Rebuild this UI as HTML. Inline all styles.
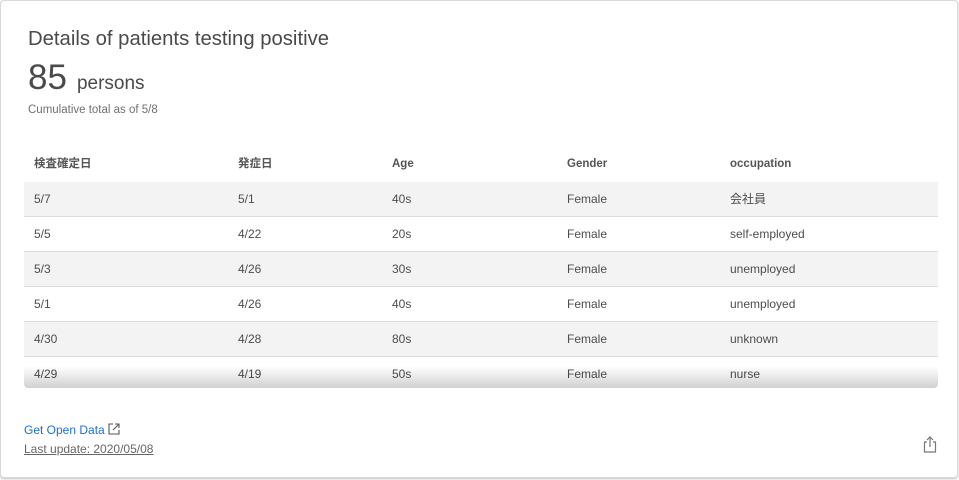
<!DOCTYPE html>
<html><head><meta charset="utf-8"><style>
body{margin:0;background:#fff;font-family:"Liberation Sans","Noto Sans CJK JP",sans-serif;color:#4d4d4d;}
.card{position:absolute;left:0;top:0;width:956px;height:476px;border:1px solid #d9d9d9;border-radius:4px;box-shadow:0 1px 2px rgba(0,0,0,.25);background:#fff;}
.t{position:absolute;left:27px;top:27px;font-size:20.3px;color:#4a4a4a;}
.n{position:absolute;left:27px;top:57px;font-size:35px;color:#4a4a4a;}
.n span{font-size:19px;margin-left:10px;}
.s{position:absolute;left:27px;top:103px;font-size:11.5px;color:#707070;}
.tbl{position:absolute;left:23px;top:146px;width:914px;height:241px;overflow:hidden;border-radius:0 0 4px 4px;}
.r{position:relative;height:35px;border-bottom:1px solid #dcdcdc;font-size:12px;color:#4d4d4d;box-sizing:border-box;}
.r.g{background:#f3f3f3}
.r.h{border-bottom:none;font-weight:bold;font-size:11.5px;color:#555}
.r div{position:absolute;top:10px;line-height:14px}
.c1{left:10px}.c2{left:214px}.c3{left:368px}.c4{left:543px}.c5{left:706px}
.fade{position:absolute;left:0;right:0;bottom:0;height:22px;background:linear-gradient(rgba(0,0,0,0),rgba(0,0,0,.18));}
.od{position:absolute;left:23px;top:422px;font-size:12px;color:#1c6fd6;}
.lu{position:absolute;left:23px;top:441px;font-size:12px;color:#666;text-decoration:underline;}
</style></head><body><div class="card">
<div class="t">Details of patients testing positive</div>
<div class="n">85<span>persons</span></div>
<div class="s">Cumulative total as of 5/8</div>
<div class="tbl">
<div class="r h"><div class="c1">検査確定日</div><div class="c2">発症日</div><div class="c3">Age</div><div class="c4">Gender</div><div class="c5">occupation</div></div>
<div class="r g"><div class="c1">5/7</div><div class="c2">5/1</div><div class="c3">40s</div><div class="c4">Female</div><div class="c5">会社員</div></div>
<div class="r"><div class="c1">5/5</div><div class="c2">4/22</div><div class="c3">20s</div><div class="c4">Female</div><div class="c5">self-employed</div></div>
<div class="r g"><div class="c1">5/3</div><div class="c2">4/26</div><div class="c3">30s</div><div class="c4">Female</div><div class="c5">unemployed</div></div>
<div class="r"><div class="c1">5/1</div><div class="c2">4/26</div><div class="c3">40s</div><div class="c4">Female</div><div class="c5">unemployed</div></div>
<div class="r g"><div class="c1">4/30</div><div class="c2">4/28</div><div class="c3">80s</div><div class="c4">Female</div><div class="c5">unknown</div></div>
<div class="r"><div class="c1">4/29</div><div class="c2">4/19</div><div class="c3">50s</div><div class="c4">Female</div><div class="c5">nurse</div></div>
<div class="fade"></div>
</div>
<div class="od">Get Open Data <svg width="12" height="12" viewBox="0 0 12 12" style="vertical-align:-1px"><path d="M5 1H1v10h10V7M7 1h4v4M11 1L5 7" fill="none" stroke="#555" stroke-width="1.1"/></svg></div>
<div class="lu">Last update: 2020/05/08</div>
<svg style="position:absolute;left:922px;top:435px" width="14" height="17" viewBox="0 0 14 17"><path d="M4 6H1.5v10h11V6H10M7 1v10M4 4l3-3 3 3" fill="none" stroke="#777" stroke-width="1.2"/></svg>
</div></body></html>
